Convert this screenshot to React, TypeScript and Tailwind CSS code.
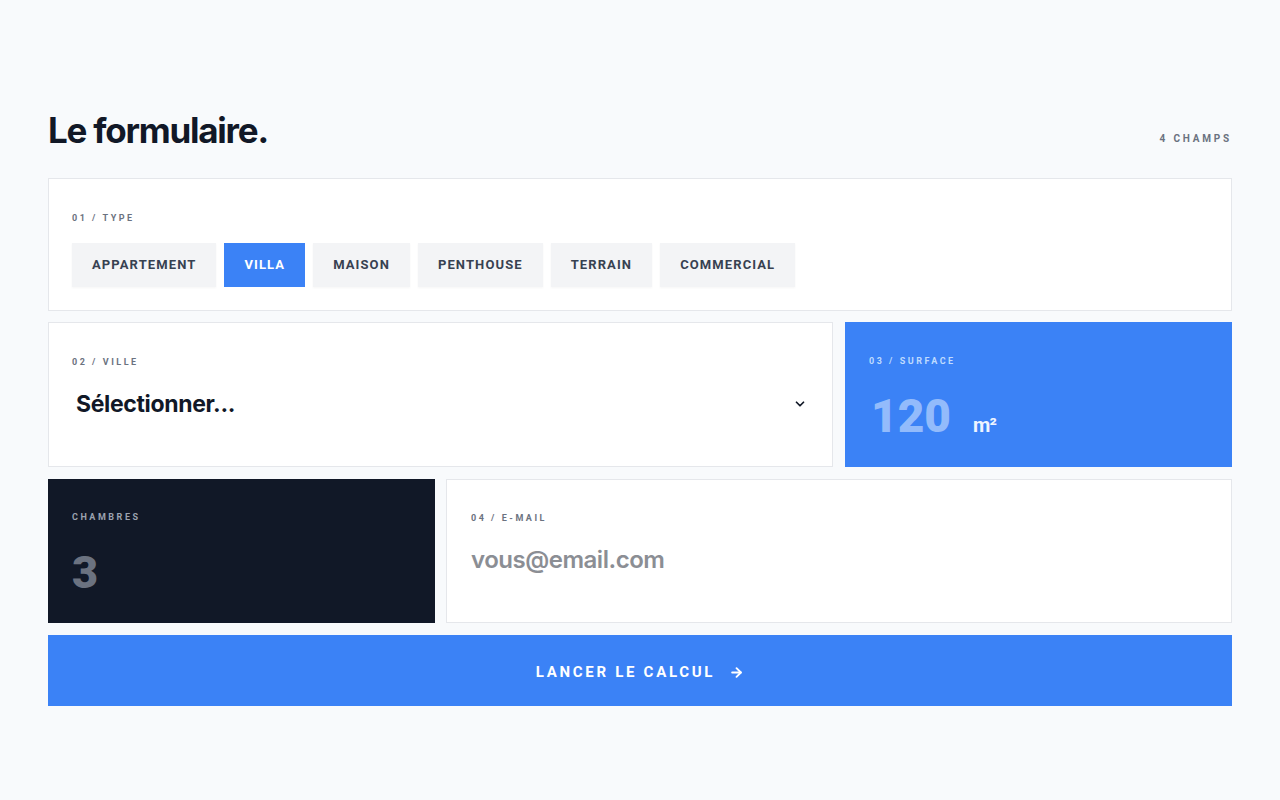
import { useState } from 'react'
import { ArrowRight, ChevronDown } from 'lucide-react'

const types = ['Appartement', 'Villa', 'Maison', 'Penthouse', 'Terrain', 'Commercial']

function Label({ children, className = '' }: { children: string; className?: string }) {
  return (
    <p
      className={
        'font-["Roboto",sans-serif] text-[9px] font-bold uppercase tracking-[0.28em] leading-4 ' +
        className
      }
    >
      {children}
    </p>
  )
}

export default function App() {
  const [active, setActive] = useState('Villa')

  return (
    <div className="min-h-screen bg-[#f8fafc] px-12 pt-[108px] font-['Inter',sans-serif]">
      <div className="flex items-end justify-between pb-[26px]">
        <h1 className="text-[35px] font-bold leading-[44px] tracking-[-0.035em] text-[#111827]">
          Le formulaire.
        </h1>
        <Label className="mb-[5px] text-[10px] text-[#6b7280]">4 champs</Label>
      </div>

      <div className="flex flex-col">
        <div className="h-[133px] border border-[#e5e7eb] bg-white px-[23px] pt-[31px]">
          <Label className="text-[#6b7280]">01 / Type</Label>
          <div className="mt-[17px] flex gap-2">
            {types.map((t) => {
              const isActive = active === t
              const styles = isActive
                ? 'bg-[#3b82f6] text-white'
                : 'bg-[#f3f4f6] text-[#374151] shadow-[0_1px_2px_rgba(0,0,0,0.04)]'
              return (
                <button
                  key={t}
                  onClick={() => setActive(t)}
                  className={
                    styles +
                    " h-11 px-5 font-['Roboto',sans-serif] text-[13px] font-bold uppercase tracking-[0.085em]"
                  }
                >
                  {t}
                </button>
              )
            })}
          </div>
        </div>

        <div className="mt-[11px] flex gap-3">
          <div className="flex h-[145px] flex-1 flex-col border border-[#e5e7eb] bg-white px-[23px] pt-[31px]">
            <Label className="text-[#6b7280]">02 / Ville</Label>
            <div className="mt-[17px] flex items-center justify-between pl-1 pr-[2px]">
              <span className="text-[23px] font-bold tracking-[-0.015em] text-[#111827]">
                Sélectionner...
              </span>
              <ChevronDown size={14} strokeWidth={3} className="text-[#111827]" />
            </div>
          </div>
          <div className="flex h-[145px] w-[387px] flex-col bg-[#3b82f6] px-6 pt-[31px]">
            <Label className="text-[#bfdbfe]">03 / Surface</Label>
            <div className="mt-[19px] flex items-baseline gap-[22px] pl-[2px]">
              <span className="font-['Roboto',sans-serif] text-[46px] font-black leading-[56px] text-[#93bbfb]">
                120
              </span>
              <span className="font-['Roboto',sans-serif] text-[20px] font-bold tracking-[-0.04em] text-[#eef4ff]">
                m²
              </span>
            </div>
          </div>
        </div>

        <div className="mt-3 flex gap-[11px]">
          <div className="flex h-[144px] w-[387px] flex-col bg-[#111827] px-6 pt-[30px]">
            <Label className="text-[#9ca3af]">Chambres</Label>
            <span className="mt-[20px] font-['Roboto',sans-serif] text-[45px] font-black leading-[56px] text-[#6b7280]">
              3
            </span>
          </div>
          <div className="flex h-[144px] flex-1 flex-col border border-[#e5e7eb] bg-white px-6 pt-[30px]">
            <Label className="text-[#6b7280]">04 / E-mail</Label>
            <input
              type="email"
              placeholder="vous@email.com"
              className="mt-[16px] bg-transparent text-[24px] font-semibold tracking-[-0.02em] text-[#111827] outline-none placeholder:text-[#8b8e94]"
            />
          </div>
        </div>

        <button className="mt-3 flex h-[71px] items-center justify-center gap-[14px] bg-[#3b82f6] pt-1 font-['Roboto',sans-serif] text-[15px] font-bold uppercase tracking-[0.18em] text-white">
          Lancer le calcul
          <ArrowRight size={15} strokeWidth={3} />
        </button>
      </div>
    </div>
  )
}
